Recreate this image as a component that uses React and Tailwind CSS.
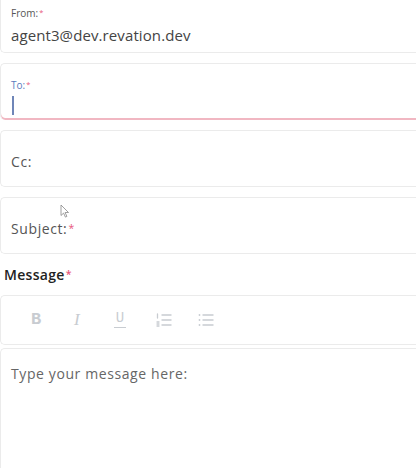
import { useState } from "react"

const Star = () => <span className="relative -top-[2px] ml-[1px] text-[0.75em] text-[#e8577a]">*</span>

const Field = ({ children, className = "" }) => (
  <div className={`h-[57px] rounded-l-[5px] border-y border-l bg-white ${className}`}>
    {children}
  </div>
)

const OrderedIcon = () => (
  <svg width="16" height="14" viewBox="0 0 16 14" fill="none" stroke="currentColor" strokeWidth="1.3">
    <path d="M1.5 1v4M1 11h2M1 13h2M3 9h-2" strokeLinecap="round" />
    <path d="M5.5 2h10M5.5 7h10M5.5 12h10" />
  </svg>
)

const BulletIcon = () => (
  <svg width="16" height="14" viewBox="0 0 16 14" fill="none" stroke="currentColor" strokeWidth="1.3">
    <circle cx="1.5" cy="2" r="0.9" fill="currentColor" stroke="none" />
    <circle cx="1.5" cy="7" r="0.9" fill="currentColor" stroke="none" />
    <circle cx="1.5" cy="12" r="0.9" fill="currentColor" stroke="none" />
    <path d="M4.5 2h11M4.5 7h11M4.5 12h11" />
  </svg>
)

const App = () => {
  const [message] = useState("")

  return (
    <div className="relative h-[468px] w-[416px] overflow-hidden bg-white font-['Open_Sans',sans-serif] text-[#4a4a4a]">
      <div className="-mt-[4px] flex flex-col gap-[10px]">
        <Field className="flex flex-col justify-center border-[#ebebeb] px-[10px] pt-[2px]">
          <div className="text-[10px] leading-[14px] text-[#555]">
            From:<Star />
          </div>
          <div className="mt-[4px] text-[15px] leading-[20px] tracking-[0.1px] text-[#444]">agent3@dev.revation.dev</div>
        </Field>

        <div className="h-[57px] rounded-l-[5px] border-t border-l border-[#ebebeb] bg-white shadow-[inset_0_-2px_0_#f1b7c2] px-[10px] pt-[14px]">
          <div className="text-[10px] leading-[14px] text-[#5b7bbd]">
            To:<Star />
          </div>
          <div className="mt-[3px] ml-[1px] h-[19px] w-[2px] bg-[#6f86b8]" />
        </div>

        <Field className="flex items-center border-[#ebebeb] px-[10px] pt-[6px]">
          <span className="text-[14px] tracking-[0.6px] text-[#555]">Cc:</span>
        </Field>

        <Field className="flex items-center border-[#ebebeb] px-[10px] pt-[5px]">
          <span className="text-[14px] tracking-[0.6px] text-[#555]">
            Subject:<Star />
          </span>
        </Field>
      </div>

      <div className="mt-[11px] pl-[4px] text-[14px] font-semibold leading-[20px] tracking-[0.3px] text-[#222]">
        Message<Star />
      </div>

      <div className="mt-[9px] flex h-[50px] items-center gap-[27px] rounded-l-[5px] border-y border-l border-[#ebebeb] pl-[30px] text-[#c8ccd1]">
        <span className="w-[14px] font-['Liberation_Mono',monospace] text-[17px] font-bold">B</span>
        <span className="w-[14px] pl-[2px] font-['Liberation_Serif',serif] text-[17px] italic">I</span>
        <span className="flex w-[14px] flex-col items-center font-['Liberation_Mono',monospace] text-[14px] leading-[13px]">
          U
          <span className="mt-[2px] h-[1.5px] w-[12px] bg-[#c8ccd1]" />
        </span>
        <span className="ml-[2px]">
          <OrderedIcon />
        </span>
        <span className="ml-[-1px]">
          <BulletIcon />
        </span>
      </div>

      <div className="mt-[3px] h-[200px] rounded-l-[5px] border-y border-l border-[#ebebeb] px-[10px] pt-[14px] text-[14px] tracking-[0.6px] text-[#666]">
        {message || "Type your message here:"}
      </div>

      <svg className="absolute left-[60px] top-[204px]" width="10" height="14" viewBox="0 0 10 14">
        <path d="M1 1v10.5l2.6-2.4 1.8 4 1.5-.7-1.8-3.9h3.4z" fill="#fff" stroke="#888" strokeWidth="0.8" />
      </svg>
    </div>
  )
}

export default App
